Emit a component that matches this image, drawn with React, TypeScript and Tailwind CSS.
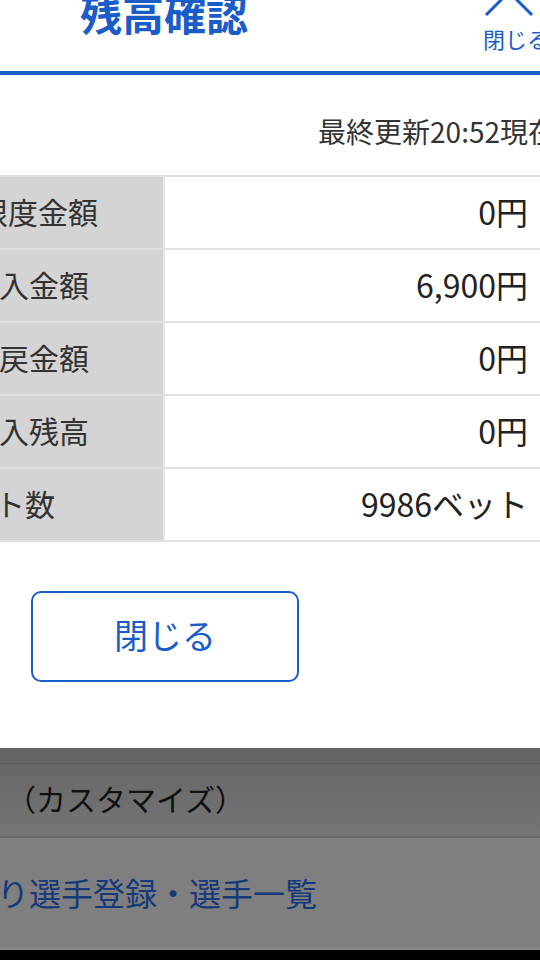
import React from "react";

const BLUE = "text-[#1a5dc8]";

const rows: { label: string; ml: string; value: string }[] = [
  { label: "限度金額", ml: "-ml-[22px]", value: "0円" },
  { label: "購入金額", ml: "-ml-[31px]", value: "6,900円" },
  { label: "払戻金額", ml: "-ml-[31px]", value: "0円" },
  { label: "購入残高", ml: "-ml-[31px]", value: "0円" },
  { label: "ベット数", ml: "-ml-[65px]", value: "9986ベット" },
];

export default function App() {
  return (
    <div
      className="w-[540px] h-[960px] overflow-hidden bg-white flex flex-col"
      style={{ fontFamily: '"Noto Sans CJK JP", "Noto Sans", sans-serif' }}
    >
      {/* header */}
      <div className="h-[75px] shrink-0 border-b-[4px] border-[#1a5dc8] flex justify-between overflow-hidden">
        <div className={`ml-[80px] -mt-[8px] text-[42px] leading-[42px] font-bold ${BLUE} whitespace-nowrap`}>
          残高確認
        </div>
        <div className="flex flex-col items-start w-[56px] overflow-hidden">
          <svg width="54" height="18" viewBox="0 0 54 18" className="-mt-[1px]">
            <polyline points="2,16 25,-7 48,16" fill="none" stroke="#1a5dc8" strokeWidth="3" />
          </svg>
          <div className={`mt-[8px] -ml-[1px] text-[22px] leading-[26px] whitespace-nowrap ${BLUE}`}>閉じる</div>
        </div>
      </div>

      {/* updated */}
      <div className="h-[100px] shrink-0 flex justify-end overflow-hidden">
        <div className="mt-[38px] -mr-[16px] text-[28px] leading-[36px] text-[#333] whitespace-nowrap">
          最終更新20:52現在
        </div>
      </div>

      {/* table */}
      <div className="shrink-0 border-t-2 border-[#e0e0e0]">
        {rows.map((r) => (
          <div key={r.label} className="flex h-[73px] border-b-2 border-[#e0e0e0]">
            <div className="w-[165px] bg-[#d4d4d4] border-r-2 border-[#e6e6e6] flex items-center overflow-hidden">
              <span className={`${r.ml} -mt-[4px] text-[30px] leading-[36px] text-[#333] whitespace-nowrap`}>
                {r.label}
              </span>
            </div>
            <div className="flex-1 flex items-center justify-end pr-[12px]">
              <span className="-mt-[4px] text-[32px] leading-[38px] text-[#222] whitespace-nowrap">{r.value}</span>
            </div>
          </div>
        ))}
      </div>

      {/* close button */}
      <div className="h-[206px] shrink-0 pt-[49px] pl-[31px]">
        <button
          className={`w-[268px] h-[91px] border-2 border-[#1a5dc8] rounded-[10px] bg-white flex items-center justify-center text-[34px] leading-[40px] ${BLUE}`}
        >
          <span className="-mt-[3px]">閉じる</span>
        </button>
      </div>

      {/* dimmed background */}
      <div className="h-[16px] shrink-0 bg-[#656565] border-b border-[#5e5e5e]" />
      <div className="h-[72px] shrink-0 bg-gradient-to-b from-[#676767] to-[#757575] flex items-center overflow-hidden">
        <span className="ml-[6px] -mt-[4px] text-[30px] leading-[36px] text-[#111] whitespace-nowrap">（カスタマイズ）</span>
      </div>
      <div className="h-[2px] shrink-0 bg-[#6a6a6a]" />
      <div className="h-[112px] shrink-0 bg-[#7f7f7f] border-b-2 border-[#8a8a8a] flex items-center overflow-hidden">
        <span className="-ml-[3px] -mt-[2px] text-[32px] leading-[40px] text-[#16397a] whitespace-nowrap">
          り選手登録・選手一覧
        </span>
      </div>
      <div className="flex-1 bg-black" />
    </div>
  );
}
